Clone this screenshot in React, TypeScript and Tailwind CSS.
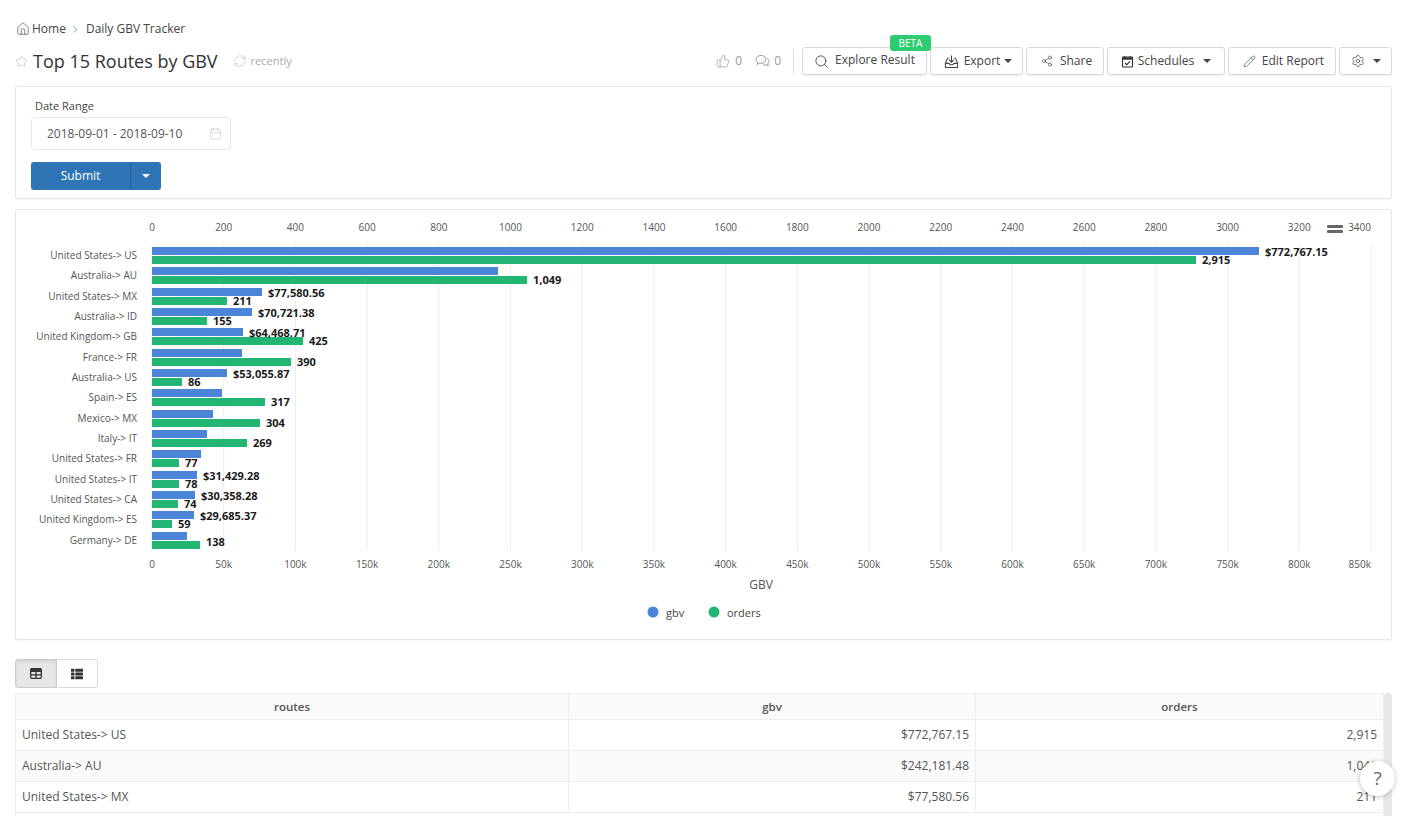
import React from "react";
import { Home, ChevronRight, Star, RefreshCw, ThumbsUp, Search, Share2, Pencil, Settings, Calendar } from "lucide-react";
import { FaThList } from "react-icons/fa";

const X0 = 152;
const rows: [string, number, number, string, string, number?][] = [
  ["United States-> US", 1259, 1196, "$772,767.15", "2,915"],
  ["Australia-> AU", 498, 527, "", "1,049"],
  ["United States-> MX", 262, 227, "$77,580.56", "211"],
  ["Australia-> ID", 252, 207, "$70,721.38", "155"],
  ["United Kingdom-> GB", 243, 303, "$64,468.71", "425"],
  ["France-> FR", 242, 291, "", "390"],
  ["Australia-> US", 227, 182, "$53,055.87", "86"],
  ["Spain-> ES", 222, 265, "", "317"],
  ["Mexico-> MX", 213, 260, "", "304"],
  ["Italy-> IT", 207, 247, "", "269"],
  ["United States-> FR", 201, 179, "", "77"],
  ["United States-> IT", 197, 179, "$31,429.28", "78"],
  ["United States-> CA", 195, 178, "$30,358.28", "74"],
  ["United Kingdom-> ES", 194, 172, "$29,685.37", "59"],
  ["Germany-> DE", 187, 200, "", "138", 542],
];
const tops = [247, 267, 288, 308, 328, 349, 369, 389, 410, 430, 450, 471, 491, 511, 532];
const ticks = Array.from({ length: 18 }, (_, i) => i);
const step = 1219 / 17;

function Caret({ color = "#444" }: { color?: string }) {
  return <span className="inline-block w-0 h-0 border-x-[4px] border-x-transparent border-t-[4px]" style={{ borderTopColor: color }} />;
}

function ToolButton({ className, children }: { className: string; children: React.ReactNode }) {
  return (
    <div className={`h-[28px] flex items-center justify-center bg-white border border-[#d9d9d9] rounded-[3px] text-[#444] shadow-[0_1px_1px_rgba(0,0,0,0.05)] ${className}`}>
      {children}
    </div>
  );
}

function ExportIcon() {
  return (
    <svg width="15" height="15" viewBox="0 0 16 16" fill="none" stroke="#444" strokeWidth="1.1">
      <path d="M8 1.5v7M5.5 6 8 8.800 10.500 6M5 4.500H3.800L1.500 10v4.500h13V10l-2.300-5.500H11M1.500 10h4l1 1.500h3l1-1.500h4" />
    </svg>
  );
}

function BubblesIcon() {
  return (
    <svg width="15" height="14" viewBox="0 0 15 14" fill="none" stroke="currentColor" strokeWidth="1" className="ml-[13px]">
      <path d="M6 1.500c2.800 0 5 1.700 5 3.900s-2.200 3.900-5 3.900c-.6 0-1.100-.1-1.600-.2L2 10.400l.6-2C1.600 7.700 1 6.600 1 5.400 1 3.200 3.200 1.500 6 1.500Z" />
      <path d="M12.300 4.400c1 .7 1.700 1.700 1.700 2.900 0 1-.5 1.900-1.300 2.600l.5 1.900-2.200-1c-.9.300-2 .3-2.900 0" />
    </svg>
  );
}

function ScheduleIcon() {
  return (
    <svg width="13" height="13" viewBox="0 0 13 13" fill="none" stroke="#333" strokeWidth="1.1">
      <rect x="1.500" y="2" width="10" height="10" rx="0.5" />
      <path d="M1.500 3.500h10" strokeWidth="2.400" />
      <path d="M3.800 1v2M9.200 1v2" />
      <path d="M4 8l1.800 1.700L9 6.400" />
    </svg>
  );
}

function Chart() {
  return (
    <svg viewBox="16 210 1375 429" className="block w-[1375px] h-[429px]" style={{ fontFamily: "'Open Sans', sans-serif" }}>
      {ticks.map((i) => (
        <line key={i} x1={X0 + i * step} x2={X0 + i * step} y1={243} y2={551} stroke="#eeeeee" strokeWidth="1" />
      ))}
      {ticks.map((i) => (
        <text key={i} x={i === 17 ? 1371 : X0 + i * step} y={231} textAnchor={i === 17 ? "end" : "middle"} fontSize="10" fill="#555">{i * 200}</text>
      ))}
      {ticks.map((i) => (
        <text key={i} x={i === 17 ? 1371 : X0 + i * step} y={568} textAnchor={i === 17 ? "end" : "middle"} fontSize="10" fill="#555">{i === 0 ? "0" : `${i * 50}k`}</text>
      ))}
      <rect x="1327" y="225" width="16" height="3" rx="1" fill="#666" />
      <rect x="1327" y="230" width="16" height="3" rx="1" fill="#666" />
      {rows.map(([name, b, g, bl, gl, gy], i) => {
        const t = tops[i];
        return (
          <g key={name}>
            <text x={137} y={t + 12.4} textAnchor="end" fontSize="10" fill="#555">{name}</text>
            <rect x={X0} y={t} width={b - X0} height={8} fill="#4a85d8" />
            <rect x={X0} y={t + 9} width={g - X0} height={8} fill="#22b573" />
            {bl && <text x={b + 6} y={t + 8.5} fontSize="11" fontWeight="700" fill="#1a1a1a">{bl}</text>}
            <text x={g + 6} y={gy ? gy + 4 : t + 17.2} fontSize="11" fontWeight="700" fill="#1a1a1a">{gl}</text>
          </g>
        );
      })}
      <text x="761" y="589" textAnchor="middle" fontSize="12" fill="#555">GBV</text>
      <circle cx="653" cy="612" r="5.5" fill="#4a85d8" />
      <text x="666" y="617" fontSize="11" fill="#444">gbv</text>
      <circle cx="714" cy="612" r="5.5" fill="#22b573" />
      <text x="727" y="617" fontSize="11" fill="#444">orders</text>
    </svg>
  );
}

const tableRows = [
  ["United States-> US", "$772,767.15", "2,915"],
  ["Australia-> AU", "$242,181.48", "1,049"],
  ["United States-> MX", "$77,580.56", "211"],
];

export default function App() {
  return (
    <div className="relative h-[816px] w-[1410px] overflow-hidden bg-white pl-[15px] pr-[18px] pt-[20px] text-[#444] font-['Open_Sans',sans-serif]">
      <div className="flex items-center h-[18px] text-[12px] text-[#444]">
        <Home size={14} strokeWidth={1.2} className="mr-[2px] ml-[1px] text-[#555]" />
        <span>Home</span>
        <ChevronRight size={11} strokeWidth={1.5} className="ml-[4px] mr-[5px] text-[#666]" />
        <span>Daily GBV Tracker</span>
      </div>

      <div className="flex items-start h-[39px] mt-[9px]">
        <div className="flex items-center h-[28px]">
          <Star size={13} strokeWidth={1.2} className="text-[#bbb]" />
          <span className="ml-[5px] text-[18px] leading-none text-[#333]">Top 15 Routes by GBV</span>
          <RefreshCw size={14} strokeWidth={1.2} className="ml-[15px] text-[#c4c4c4]" />
          <span className="ml-[4px] text-[11px] text-[#aaa]">recently</span>
        </div>
        <div className="ml-auto flex items-center gap-[3px]">
          <div className="flex items-center h-[24px] pr-[8px] mr-[5px] border-r border-[#ddd] text-[12px] text-[#999]">
            <ThumbsUp size={14} strokeWidth={1.2} />
            <span className="ml-[5px]">0</span>
            <BubblesIcon />
            <span className="ml-[4px] mr-[4px]">0</span>
          </div>
          <div className="relative">
            <ToolButton className="w-[125px] gap-[5px]">
              <Search size={15} strokeWidth={1.4} />
              <span className="text-[12px] mt-[-2px] ml-[1px]">Explore Result</span>
            </ToolButton>
            <span className="absolute right-[-4px] top-[-12px] h-[16px] w-[41px] rounded-[3px] bg-[#2ecc71] text-center text-[10px] leading-[16px] text-white">BETA</span>
          </div>
          <ToolButton className="w-[93px] gap-[4px] pl-[3px]">
            <ExportIcon />
            <span className="text-[12px] ml-[1px]">Export</span>
            <Caret />
          </ToolButton>
          <ToolButton className="w-[78px] gap-[7px] pl-[3px]">
            <Share2 size={12} strokeWidth={1.3} />
            <span className="text-[12px]">Share</span>
          </ToolButton>
          <ToolButton className="w-[118px] gap-[4px]">
            <ScheduleIcon />
            <span className="text-[12px] mr-[5px]">Schedules</span>
            <Caret />
          </ToolButton>
          <ToolButton className="w-[108px] gap-[6px] pl-[3px]">
            <Pencil size={13} strokeWidth={1.2} />
            <span className="text-[12px]">Edit Report</span>
          </ToolButton>
          <ToolButton className="w-[53px] gap-[8px]">
            <Settings size={14} strokeWidth={1.2} />
            <Caret />
          </ToolButton>
        </div>
      </div>

      <div className="h-[113px] border border-[#e6e6e6] rounded-[2px] shadow-[0_1px_2px_rgba(0,0,0,0.04)] pl-[15px] pt-[10px]">
        <div className="pl-[4px] text-[11px] leading-[18px] text-[#444]">Date Range</div>
        <div className="mt-[2px] flex items-center justify-between w-[200px] h-[33px] border border-[#e8e8e8] rounded-[4px] pl-[15px] pr-[8px] text-[12px] text-[#555]">
          <span>2018-09-01 - 2018-09-10</span>
          <Calendar size={13} strokeWidth={1} className="text-[#bbb]" />
        </div>
        <div className="mt-[12px] flex w-[130px] h-[28px] rounded-[3px] bg-[#2f74b5] text-white text-[12px]">
          <div className="w-[100px] flex items-center justify-center border-r border-[#25609a]">Submit</div>
          <div className="flex-1 flex items-center justify-center"><Caret color="#fff" /></div>
        </div>
      </div>

      <div className="mt-[10px] h-[431px] border border-[#e6e6e6] rounded-[2px] shadow-[0_1px_2px_rgba(0,0,0,0.04)]">
        <Chart />
      </div>

      <div className="mt-[19px] flex w-[83px] h-[29px] text-[#333]">
        <div className="w-[42px] flex items-center justify-center bg-[#e6e6e6] border border-[#ccc] rounded-l-[3px] shadow-[inset_0_2px_3px_rgba(0,0,0,0.08)]">
          <svg width="12" height="11" viewBox="0 0 12 11" fill="none" stroke="#333" strokeWidth="1.3">
            <rect x="0.7" y="0.7" width="10.6" height="9.6" rx="1" />
            <path d="M0.7 3.4h10.6M0.7 6.8h10.6M6 3.4v6.9" />
            <path d="M0.7 2h10.6" strokeWidth="2.4" />
          </svg>
        </div>
        <div className="flex-1 flex items-center justify-center border border-l-0 border-[#d9d9d9] rounded-r-[3px]">
          <FaThList size={12} color="#333" />
        </div>
      </div>

      <div className="mt-[5px] flex">
        <div className="flex-1 border-x border-[#efefef]">
          <div className="grid grid-cols-[553px_407px_1fr] h-[27px] bg-[#fafafa] border-y border-[#eeeeee] text-[11.5px] font-semibold text-[#555]">
            <div className="flex items-center justify-center border-r border-[#eeeeee]">routes</div>
            <div className="flex items-center justify-center border-r border-[#eeeeee]">gbv</div>
            <div className="flex items-center justify-center">orders</div>
          </div>
          {tableRows.map(([a, b, c], i) => (
            <div key={a} className={`grid grid-cols-[553px_407px_1fr] h-[31px] border-b border-[#eeeeee] text-[12px] text-[#555] ${i === 1 ? "bg-[#fafafa]" : "bg-white"}`}>
              <div className="flex items-center pl-[6px] border-r border-[#eeeeee]">{a}</div>
              <div className="flex items-center justify-end pr-[6px] border-r border-[#eeeeee]">{b}</div>
              <div className="flex items-center justify-end pr-[6px]">{c}</div>
            </div>
          ))}
        </div>
        <div className="w-[8px] h-[200px] rounded-[4px] bg-[#e8e8e8]" />
      </div>

      <div className="absolute left-[1360px] top-[761px] w-[35px] h-[35px] rounded-full bg-white shadow-[0_1px_5px_rgba(0,0,0,0.25)] flex items-center justify-center text-[19px] text-[#666]">?</div>
    </div>
  );
}
